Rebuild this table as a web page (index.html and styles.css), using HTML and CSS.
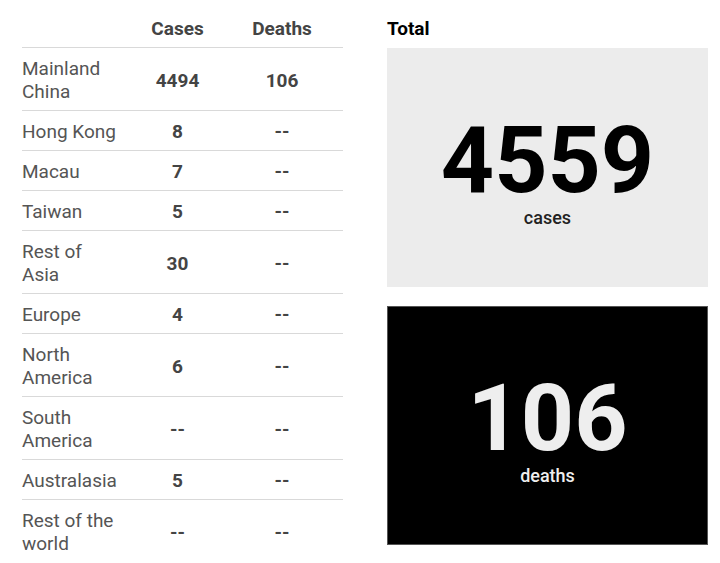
FILE: index.html
```html
<!DOCTYPE html>
<html lang="en">
<head>
    <meta charset="UTF-8">
    <title>Coronavirus cases</title>
    <link rel="stylesheet" href="styles.css">
</head>
<body>

    <div class="page">
        <table class="cases-table">
            <thead>
                <tr>
                    <th class="region"></th>
                    <th>Cases</th>
                    <th>Deaths</th>
                </tr>
            </thead>
            <tbody>
                <tr><td class="region">Mainland China</td><td>4494</td><td>106</td></tr>
                <tr><td class="region">Hong Kong</td><td>8</td><td>--</td></tr>
                <tr><td class="region">Macau</td><td>7</td><td>--</td></tr>
                <tr><td class="region">Taiwan</td><td>5</td><td>--</td></tr>
                <tr><td class="region">Rest of Asia</td><td>30</td><td>--</td></tr>
                <tr><td class="region">Europe</td><td>4</td><td>--</td></tr>
                <tr><td class="region">North America</td><td>6</td><td>--</td></tr>
                <tr><td class="region">South America</td><td>--</td><td>--</td></tr>
                <tr><td class="region">Australasia</td><td>5</td><td>--</td></tr>
                <tr><td class="region">Rest of the world</td><td>--</td><td>--</td></tr>
            </tbody>
        </table>

        <div class="totals">
            <h2>Total</h2>
            <div class="total-box light">
                <span class="big">4559</span>
                <span class="label">cases</span>
            </div>
            <div class="total-box dark">
                <span class="big">106</span>
                <span class="label">deaths</span>
            </div>
        </div>
    </div>

</body>
</html>
```

FILE: styles.css
```css
body {
    font-family: Roboto, "Liberation Sans", Arial, sans-serif;
    background-color: #fff;
    margin: 0;
    font-size: 19px;
    line-height: 23px;
}
.page {
    display: grid;
    grid-template-columns: 321px 321px;
    column-gap: 44px;
    padding: 10px 12px 0 22px;
}
.cases-table {
    width: 321px;
    border-collapse: collapse;
    table-layout: fixed;
}
.cases-table th {
    padding: 7px 0;
    font-weight: bold;
    color: #444;
    text-align: center;
    border-bottom: 1px solid #d9d9d9;
}
.cases-table th:nth-child(2) {
    width: 87px;
}
.cases-table th:nth-child(3) {
    width: 122px;
}
.cases-table td {
    padding: 9px 0 7px;
    text-align: center;
    font-weight: bold;
    color: #444;
    border-bottom: 1px solid #d9d9d9;
}
.cases-table tbody tr:last-child td {
    border-bottom: none;
}
.cases-table .region {
    text-align: left;
    font-weight: normal;
    color: #555;
    padding-right: 16px;
}
.totals h2 {
    margin: 0 0 8px;
    padding-top: 7px;
    font-size: 19px;
    line-height: 23px;
    font-weight: bold;
    color: #000;
}
.total-box {
    height: 239px;
    box-sizing: border-box;
    padding-top: 5px;
    display: flex;
    flex-direction: column;
    align-items: center;
    justify-content: center;
}
.total-box.light {
    background-color: #ececec;
    color: #000;
    margin-bottom: 19px;
}
.total-box.dark {
    background-color: #000;
    color: #eee;
    border: 1px solid #555;
}
.big {
    font-size: 93px;
    line-height: 96px;
    font-weight: bold;
}
.label {
    font-size: 18px;
    line-height: 18px;
    font-weight: 500;
}
.light .label {
    color: #222;
}
```
